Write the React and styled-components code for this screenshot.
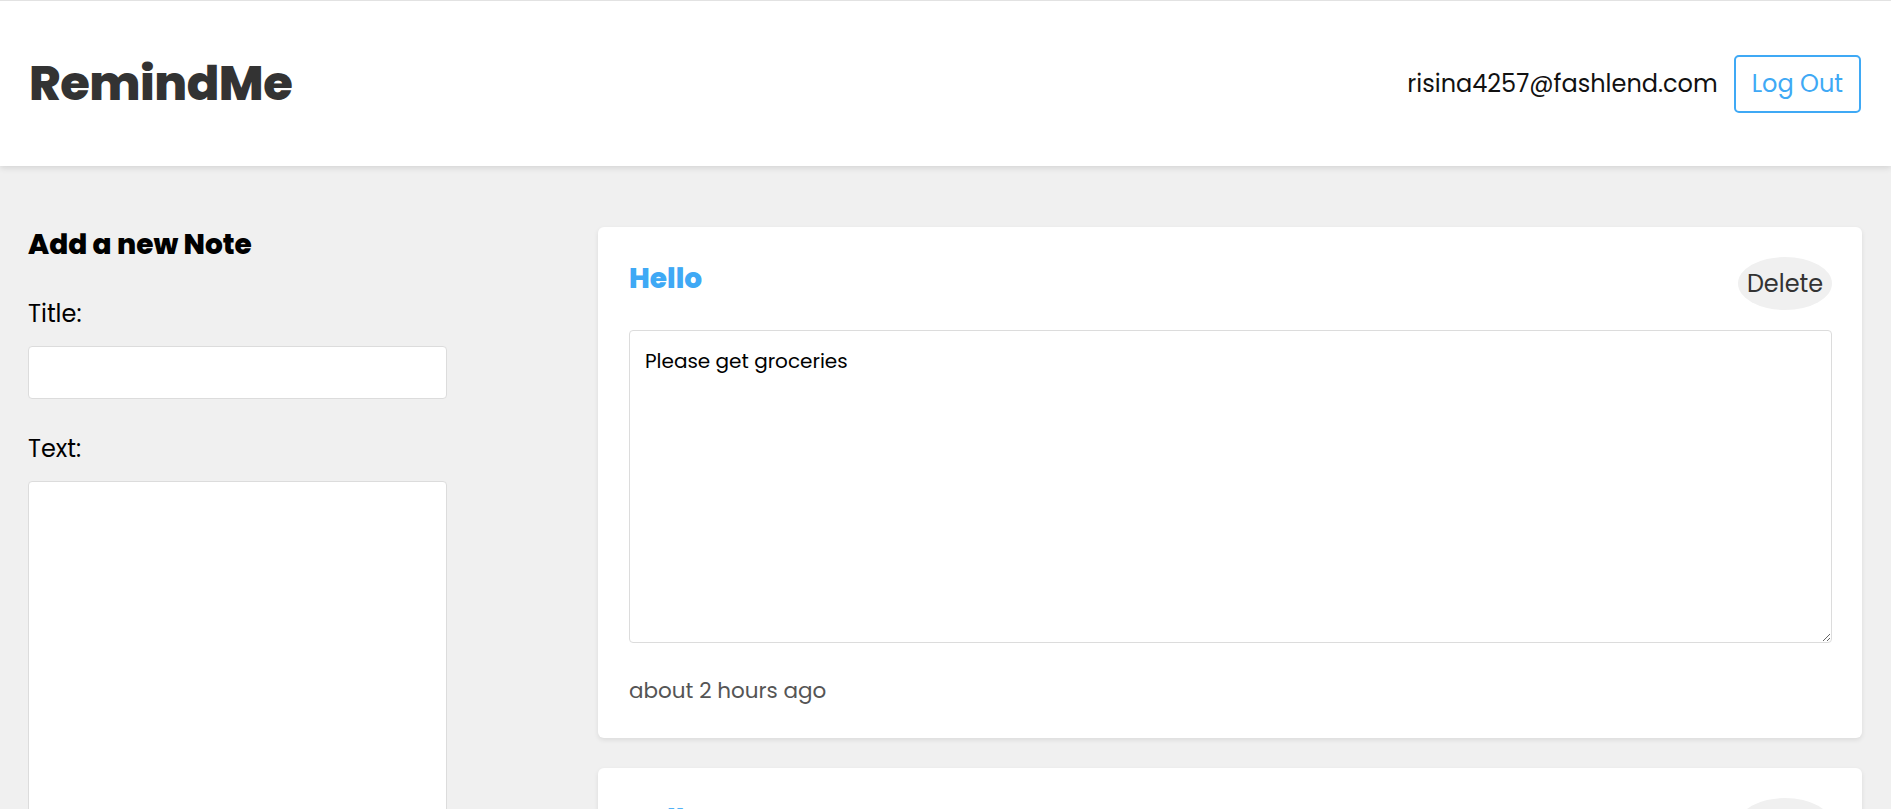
import React from 'react';
import styled, { createGlobalStyle } from 'styled-components';

const GlobalStyle = createGlobalStyle`
    * { box-sizing: border-box; }
    body {
        margin: 0;
        background-color: #f0f0f0;
        font-family: Poppins, Inter, "DejaVu Sans", sans-serif;
        color: #000;
    }
`

const Header = styled.header`
    display: flex;
    align-items: center;
    justify-content: space-between;
    height: 166px;
    padding: 0 30px 0 29px;
    background-color: #fff;
    border-top: 1px solid #e2e2e2;
    box-shadow: 0 2px 6px rgba(0, 0, 0, 0.12);
`

const Logo = styled.h1`
    margin: 0;
    font-size: 48px;
    font-weight: 800;
    color: #333;
    letter-spacing: -0.5px;
`

const UserBox = styled.div`
    display: flex;
    align-items: center;
    gap: 16px;
`

const Email = styled.span`
    font-size: 24px;
    color: #111;
`

const OutlineButton = styled.button`
    height: 58px;
    padding: 0 16px;
    font-family: inherit;
    font-size: 24px;
    color: #3fa9f5;
    background: #fff;
    border: 2px solid #3fa9f5;
    border-radius: 5px;
    cursor: pointer;
`

const Main = styled.main`
    display: grid;
    grid-template-columns: 419px 1fr;
    align-items: start;
    column-gap: 151px;
    padding: 61px 29px 0 28px;
`

const Form = styled.form`
    display: flex;
    flex-direction: column;
`

const Heading = styled.h2`
    margin: 0;
    padding-top: ${props => props.accent ? '4px' : '0'};
    font-size: 28px;
    line-height: 36px;
    font-weight: 800;
    color: ${props => props.accent ? '#3fa9f5' : '#000'};
`

const Label = styled.label`
    margin-top: ${props => props.first ? '33px' : '32px'};
    margin-bottom: 14px;
    font-size: 24px;
    line-height: 36px;
`

const Input = styled.input`
    height: 53px;
    padding: 0 15px;
    font-family: inherit;
    font-size: 20px;
    background: #fff;
    border: 1px solid #dcdcdc;
    border-radius: 4px;
`

const TextArea = styled.textarea`
    display: block;
    width: 100%;
    height: ${props => props.tall ? '420px' : '313px'};
    padding: 16px 15px;
    font-family: inherit;
    font-size: 20px;
    line-height: 28px;
    color: #000;
    background: #fff;
    border: 1px solid #dcdcdc;
    border-radius: 4px;
`

const NoteList = styled.div`
    display: flex;
    flex-direction: column;
    gap: 30px;
`

const Card = styled.div`
    padding: 30px 30px 31px 31px;
    background: #fff;
    border-radius: 6px;
    box-shadow: 0 2px 5px rgba(0, 0, 0, 0.09);
`

const CardTop = styled.div`
    display: flex;
    align-items: flex-start;
    justify-content: space-between;
    margin-bottom: 20px;
`

const DeleteButton = styled.button`
    width: 94px;
    height: 53px;
    padding: 0;
    font-family: inherit;
    font-size: 24px;
    color: #333;
    background: #f0f0f0;
    border: none;
    border-radius: 50%;
    cursor: pointer;
`

const Time = styled.p`
    margin: 31px 0 0;
    font-size: 21.5px;
    line-height: 33px;
    color: #555;
`

const notes = [
    { id: 1, title: 'Hello', text: 'Please get groceries', time: 'about 2 hours ago' },
    { id: 2, title: 'Hello', text: 'Please get groceries', time: 'about 2 hours ago' },
]

const App = () => {
    return (
        <>
            <GlobalStyle />
            <Header>
                <Logo>RemindMe</Logo>
                <UserBox>
                    <Email>risina4257@fashlend.com</Email>
                    <OutlineButton>Log Out</OutlineButton>
                </UserBox>
            </Header>
            <Main>
                <Form>
                    <Heading>Add a new Note</Heading>
                    <Label first>Title:</Label>
                    <Input type="text" />
                    <Label>Text:</Label>
                    <TextArea tall />
                </Form>
                <NoteList>
                    {notes.map(note => (
                        <Card key={note.id}>
                            <CardTop>
                                <Heading accent>{note.title}</Heading>
                                <DeleteButton>Delete</DeleteButton>
                            </CardTop>
                            <TextArea defaultValue={note.text} />
                            <Time>{note.time}</Time>
                        </Card>
                    ))}
                </NoteList>
            </Main>
        </>
    )
}

export default App;
